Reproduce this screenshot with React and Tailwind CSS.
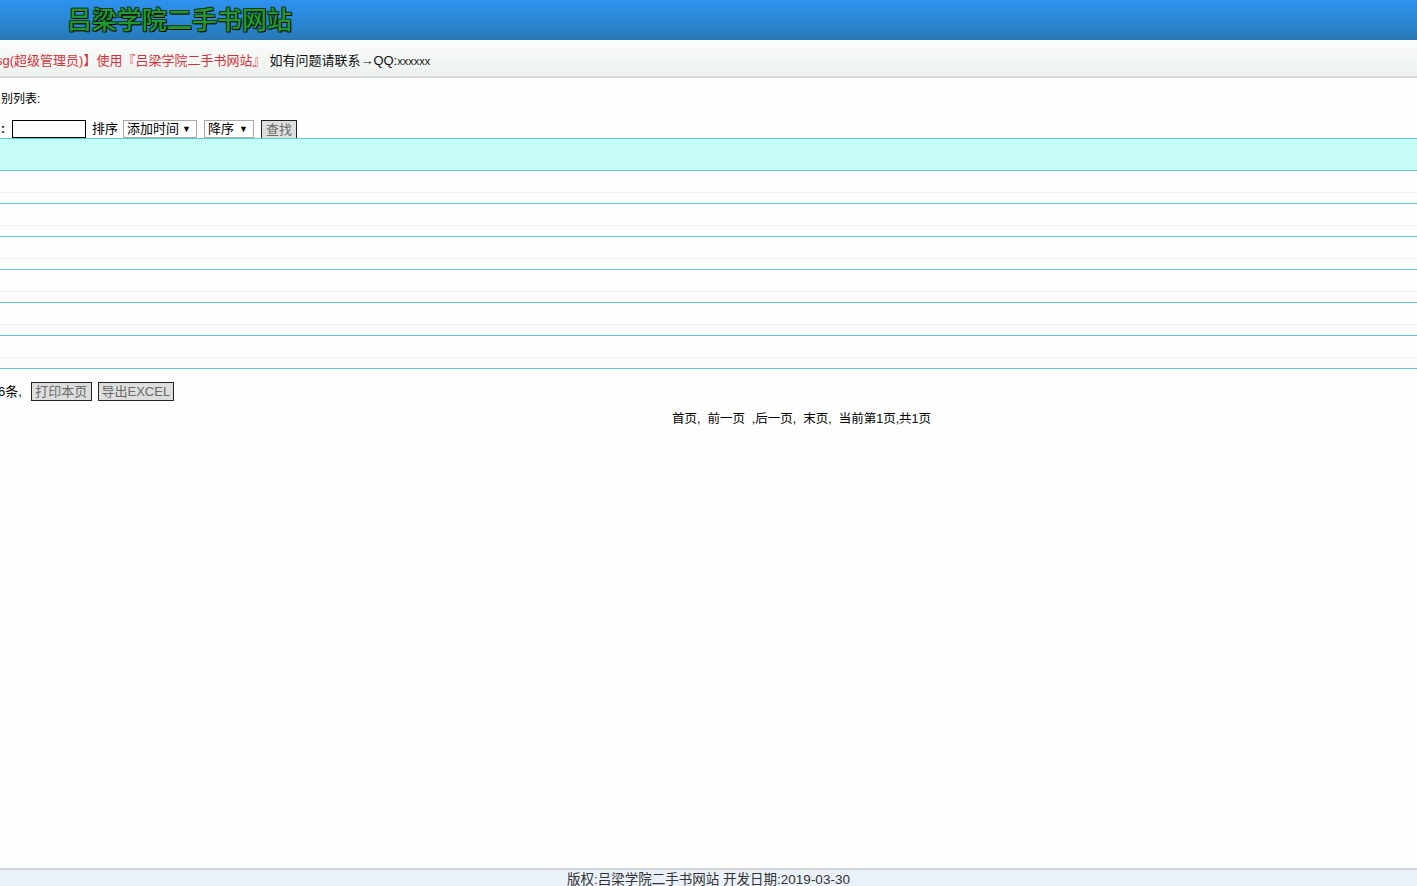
import React from 'react';

const rows = [0, 1, 2, 3, 4, 5];

function FakeSelect({ label, width }) {
  return (
    <div
      className={`flex h-[18px] items-center justify-between whitespace-nowrap border border-[#a9a9a9] bg-white pl-[3px] pr-[5px] text-[13px] text-black ${width}`}
    >
      <span>{label}</span>
      <span className="text-[9px] leading-none">▼</span>
    </div>
  );
}

function GrayButton({ children, className = '' }) {
  return (
    <button
      className={`h-[19px] whitespace-nowrap border border-[#222] bg-[#dcdfdd] text-[13px] leading-none text-[#6a6a6a] ${className}`}
    >
      {children}
    </button>
  );
}

export default function App() {
  return (
    <div
      className="flex h-[886px] w-[1417px] flex-col overflow-hidden bg-[#fdfefd] text-[12px] text-black"
      style={{ fontFamily: '"Liberation Sans", "Noto Sans CJK SC", sans-serif' }}
    >
      {/* top banner */}
      <header className="flex h-[40px] shrink-0 items-center bg-gradient-to-b from-[#2e92ee] via-[#2a88d6] to-[#2878b6] pl-[67px]">
        <h1 className="text-[25px] font-medium leading-none text-[#209a30] [text-shadow:1px_1px_0_#000,-1px_-1px_0_#0b3a1a,1px_-1px_0_#0b3a1a,-1px_1px_0_#0b3a1a]">
          吕梁学院二手书网站
        </h1>
      </header>

      {/* welcome bar */}
      <div className="flex h-[38px] shrink-0 items-center border-b-2 border-[#d8dad8] bg-gradient-to-b from-[#fafdfb] to-[#eef2ee] pt-[5px] text-[13px]">
        <span className="-ml-[4px] text-[#d8303a]">sg(超级管理员)】使用『吕梁学院二手书网站』</span>
        <span className="ml-[4px] text-[#111]">
          如有问题请联系→QQ:<span className="text-[11px]">xxxxxx</span>
        </span>
      </div>

      {/* main */}
      <main className="flex flex-1 flex-col">
        <div className="mt-[13px] pl-[1px] text-[12px] leading-[16px]">别列表:</div>

        <div className="mt-[13px] flex h-[18px] items-center text-[13px]">
          <span className="pl-[1px] text-[12px] font-bold">:</span>
          <div className="ml-[7px] h-[18px] w-[74px] border border-black bg-white" />
          <span className="ml-[6px]">排序</span>
          <FakeSelect label="添加时间" width="ml-[5px] w-[74px]" />
          <FakeSelect label="降序" width="ml-[7px] w-[50px]" />
          <GrayButton className="ml-[7px] w-[36px]">查找</GrayButton>
        </div>

        {/* table */}
        <div className="flex flex-col">
          <div className="h-[33px] border-y border-[#5ccfd0] bg-[#c5fcf8]" />
          {rows.map((r) => (
            <div key={r} className="flex h-[33px] flex-col border-b border-[#5ccfd0] bg-[#fdfefd]">
              <div className="h-[22px] border-b border-[#f1f1ee]" />
              <div className="flex-1 bg-[#fcfdfb]" />
            </div>
          ))}
        </div>

        <div className="mt-[13px] flex h-[19px] items-center text-[13px]">
          <span className="-ml-[2px]">6条,</span>
          <GrayButton className="ml-[9px] w-[61px]">打印本页</GrayButton>
          <GrayButton className="ml-[6px] w-[76px]">导出EXCEL</GrayButton>
        </div>

        <div className="mt-[10px] whitespace-pre pl-[672px] text-[12.5px] leading-[16px]">
          首页,  前一页  ,后一页,  末页,  当前第1页,共1页
        </div>
      </main>

      {/* footer */}
      <footer className="flex h-[18px] shrink-0 items-start justify-center border-t-2 border-[#cfd4d3] bg-[#ebf1f8] text-[13.5px] leading-[20px] text-[#333]">
        版权:吕梁学院二手书网站 开发日期:2019-03-30
      </footer>
    </div>
  );
}
